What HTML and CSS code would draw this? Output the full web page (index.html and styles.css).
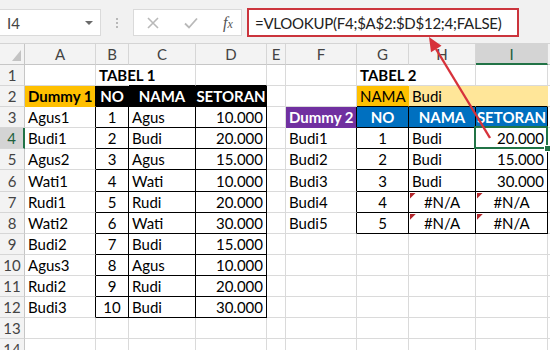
FILE: index.html
```html
<!DOCTYPE html>
<html>
<head>
<meta charset="utf-8">
<link rel="stylesheet" href="styles.css">
</head>
<body>
<div class="fbar">
  <div class="namebox"><span>I4</span><span class="dd"></span></div>
  <div class="dots"><i></i><i></i><i></i></div>
  <div class="fxbox">
    <svg class="ic" width="12" height="12" viewBox="0 0 12 12"><path d="M1 1L11 11M11 1L1 11" stroke="#b9b9b9" stroke-width="1.6" fill="none"/></svg>
    <svg class="ic" width="14" height="12" viewBox="0 0 14 12"><path d="M1 6.5L5 10.5L13 1.5" stroke="#b9b9b9" stroke-width="1.8" fill="none"/></svg>
    <span class="fx"><i>f</i><i class="x">x</i></span>
  </div>
  <div class="formula">=VLOOKUP(F4;$A$2:$D$12;4;FALSE)</div>
</div>
<div class="sheet">
  <div class="corner"></div>
  <div class="ch">A</div><div class="ch">B</div><div class="ch">C</div><div class="ch">D</div><div class="ch">E</div><div class="ch">F</div><div class="ch">G</div><div class="ch">H</div><div class="ch sel">I</div><div class="ch"></div>

  <div class="rh">1</div>
  <div class="c"></div><div class="c b ov">TABEL 1</div><div class="c u"></div><div class="c u"></div><div class="c"></div><div class="c"></div><div class="c b ov">TABEL 2</div><div class="c"></div><div class="c"></div><div class="c"></div>

  <div class="rh">2</div>
  <div class="c b or l">Dummy 1</div><div class="c hk m">NO</div><div class="c hk m">NAMA</div><div class="c hk m">SETORAN</div><div class="c"></div><div class="c"></div><div class="c or u">NAMA</div><div class="c ye u">Budi</div><div class="c ye u"></div><div class="c"></div>

  <div class="rh">3</div>
  <div class="c l">Agus1</div><div class="c t m">1</div><div class="c t">Agus</div><div class="c t r">10.000</div><div class="c"></div><div class="c pu l">Dummy 2</div><div class="c hb m">NO</div><div class="c hb m">NAMA</div><div class="c hb m">SETORAN</div><div class="c"></div>

  <div class="rh sel">4</div>
  <div class="c l">Budi1</div><div class="c t m">2</div><div class="c t">Budi</div><div class="c t r">20.000</div><div class="c"></div><div class="c l">Budi1</div><div class="c t m">1</div><div class="c t">Budi</div><div class="c t r sc">20.000</div><div class="c"></div>

  <div class="rh">5</div>
  <div class="c l">Agus2</div><div class="c t m">3</div><div class="c t">Agus</div><div class="c t r">15.000</div><div class="c"></div><div class="c l">Budi2</div><div class="c t m">2</div><div class="c t">Budi</div><div class="c t r">15.000</div><div class="c"></div>

  <div class="rh">6</div>
  <div class="c l">Wati1</div><div class="c t m">4</div><div class="c t">Wati</div><div class="c t r">10.000</div><div class="c"></div><div class="c l">Budi3</div><div class="c t m">3</div><div class="c t">Budi</div><div class="c t r">30.000</div><div class="c"></div>

  <div class="rh">7</div>
  <div class="c l">Rudi1</div><div class="c t m">5</div><div class="c t">Rudi</div><div class="c t r">20.000</div><div class="c"></div><div class="c l">Budi4</div><div class="c t m">4</div><div class="c t m err">#N/A</div><div class="c t m err">#N/A</div><div class="c"></div>

  <div class="rh">8</div>
  <div class="c l">Wati2</div><div class="c t m">6</div><div class="c t">Wati</div><div class="c t r">30.000</div><div class="c"></div><div class="c l">Budi5</div><div class="c t m">5</div><div class="c t m err">#N/A</div><div class="c t m err">#N/A</div><div class="c"></div>

  <div class="rh">9</div>
  <div class="c l">Budi2</div><div class="c t m">7</div><div class="c t">Budi</div><div class="c t r">15.000</div><div class="c"></div><div class="c"></div><div class="c"></div><div class="c"></div><div class="c"></div><div class="c"></div>

  <div class="rh">10</div>
  <div class="c l">Agus3</div><div class="c t m">8</div><div class="c t">Agus</div><div class="c t r">10.000</div><div class="c"></div><div class="c"></div><div class="c"></div><div class="c"></div><div class="c"></div><div class="c"></div>

  <div class="rh">11</div>
  <div class="c l">Rudi2</div><div class="c t m">9</div><div class="c t">Rudi</div><div class="c t r">20.000</div><div class="c"></div><div class="c"></div><div class="c"></div><div class="c"></div><div class="c"></div><div class="c"></div>

  <div class="rh">12</div>
  <div class="c l">Budi3</div><div class="c t m">10</div><div class="c t">Budi</div><div class="c t r">30.000</div><div class="c"></div><div class="c"></div><div class="c"></div><div class="c"></div><div class="c"></div><div class="c"></div>

  <div class="rh">13</div>
  <div class="c"></div><div class="c"></div><div class="c"></div><div class="c"></div><div class="c"></div><div class="c"></div><div class="c"></div><div class="c"></div><div class="c"></div><div class="c"></div>

  <div class="rh">14</div>
  <div class="c"></div><div class="c"></div><div class="c"></div><div class="c"></div><div class="c"></div><div class="c"></div><div class="c"></div><div class="c"></div><div class="c"></div><div class="c"></div>
</div>
<svg class="arrow" width="550" height="350" viewBox="0 0 550 350">
  <line x1="490" y1="138" x2="436" y2="49" stroke="#d7323b" stroke-width="2.4"/>
  <polygon points="429,37 441.5,45.8 431,52.2" fill="#d7323b"/>
</svg>
</body>
</html>
```
FILE: styles.css
```css
html, body {
  margin: 0;
  padding: 0;
}
body {
  width: 550px;
  height: 350px;
  overflow: hidden;
  position: relative;
  background: #fff;
  font-family: Lato, "Liberation Sans", sans-serif;
}

/* formula bar */
.fbar {
  height: 44px;
  box-sizing: border-box;
  background: #f1f1f1;
  border-bottom: 1px solid #d4d4d4;
  display: flex;
  align-items: flex-start;
  padding-top: 8px;
}
.namebox {
  width: 101px;
  height: 27px;
  margin-top: 1px;
  box-sizing: border-box;
  background: #fff;
  border: 1px solid #dadada;
  border-left: none;
  display: flex;
  align-items: center;
  justify-content: space-between;
  padding: 0 7px 0 7px;
  font-size: 15px;
  color: #444;
}
.dd {
  width: 0;
  height: 0;
  border-left: 4px solid transparent;
  border-right: 4px solid transparent;
  border-top: 4px solid #6a6a6a;
}
.dots {
  width: 32px;
  height: 27px;
  margin-top: 1px;
  display: flex;
  flex-direction: column;
  align-items: center;
  justify-content: center;
  gap: 2px;
}
.dots i {
  width: 2px;
  height: 2px;
  background: #b8b8b8;
}
.fxbox {
  width: 109px;
  height: 27px;
  margin-top: 1px;
  box-sizing: border-box;
  background: #fff;
  border: 1px solid #dadada;
  display: flex;
  align-items: center;
  padding-left: 13px;
  gap: 25px;
}
.fx {
  font-family: "Liberation Serif", serif;
  font-size: 16px;
  color: #555;
}
.fx .x {
  font-size: 12px;
}
.formula {
  margin-left: 5px;
  width: 272px;
  height: 29px;
  box-sizing: border-box;
  background: #fff;
  border: 2px solid #cb343c;
  display: flex;
  align-items: center;
  padding-left: 6px;
  font-size: 15px;
  letter-spacing: -0.25px;
  color: #222;
  white-space: nowrap;
}

/* sheet grid */
.sheet {
  display: grid;
  grid-template-columns: 25px 71px 33px 67px 71px 19px 71px 52px 67px 72px 1fr;
  grid-template-rows: 21px repeat(14, 21.1px);
}
.corner {
  background: #f3f3f3;
  border-right: 1px solid #c6c6c6;
  border-bottom: 1px solid #c6c6c6;
  position: relative;
}
.corner::after {
  content: "";
  position: absolute;
  right: 3px;
  bottom: 3px;
  width: 9px;
  height: 11px;
  background: #c3c3c3;
  clip-path: polygon(100% 0, 100% 100%, 0 100%);
}
.ch {
  background: #f3f3f3;
  border-right: 1px solid #d6d6d6;
  border-bottom: 1px solid #c6c6c6;
  display: flex;
  align-items: center;
  justify-content: center;
  font-size: 15px;
  color: #444;
}
.ch.sel {
  background: #d4d4d4;
  border-bottom: 2px solid #217346;
  color: #21603c;
}
.rh {
  background: #f3f3f3;
  border-right: 1px solid #c6c6c6;
  border-bottom: 1px solid #d6d6d6;
  display: flex;
  align-items: center;
  justify-content: center;
  font-size: 15px;
  color: #444;
  overflow: hidden;
}
.rh.sel {
  background: #d4d4d4;
  border-right: 2px solid #217346;
  color: #21603c;
}

.c {
  box-sizing: border-box;
  min-width: 0;
  border-right: 1px solid #dadada;
  border-bottom: 1px solid #dadada;
  font-size: 15px;
  color: #000;
  padding: 0 3px 1px 3px;
  display: flex;
  align-items: flex-end;
  white-space: nowrap;
  overflow: hidden;
  position: relative;
}
.b { font-weight: 700; }
.m { justify-content: center; }
.r { justify-content: flex-end; }
.ov {
  overflow: visible;
  border-right-color: transparent;
}

/* fills */
.or { background: #ffc000; border-color: #ffc000; }
.ye { background: #ffe699; border-color: #ffe699; }
.hk { background: #000; border-color: #000; color: #fff; font-weight: 700; }
.hb { background: #0070c0; color: #fff; font-weight: 700; border-color: #000; }
.pu { background: #7030a0; color: #fff; font-weight: 700; border-bottom-color: #7030a0; }

/* table borders */
.t { border-right-color: #000; border-bottom-color: #000; }
.l { border-right-color: #000; }
.u { border-bottom-color: #000; }

/* error indicator */
.err::before {
  content: "";
  position: absolute;
  left: 1px;
  top: 1px;
  width: 6px;
  height: 6px;
  background: #b3262b;
  clip-path: polygon(0 0, 100% 0, 0 100%);
}

/* selected cell */
.sc { overflow: visible; }
.sc::after {
  content: "";
  position: absolute;
  left: -2px;
  top: -2px;
  right: -1px;
  bottom: -1px;
  border: 2px solid #217346;
}
.sc::before {
  content: "";
  position: absolute;
  right: -4px;
  bottom: -4px;
  width: 5px;
  height: 5px;
  background: #217346;
  border: 1px solid #fff;
  z-index: 2;
}

.arrow {
  position: absolute;
  left: 0;
  top: 0;
  pointer-events: none;
}
```
